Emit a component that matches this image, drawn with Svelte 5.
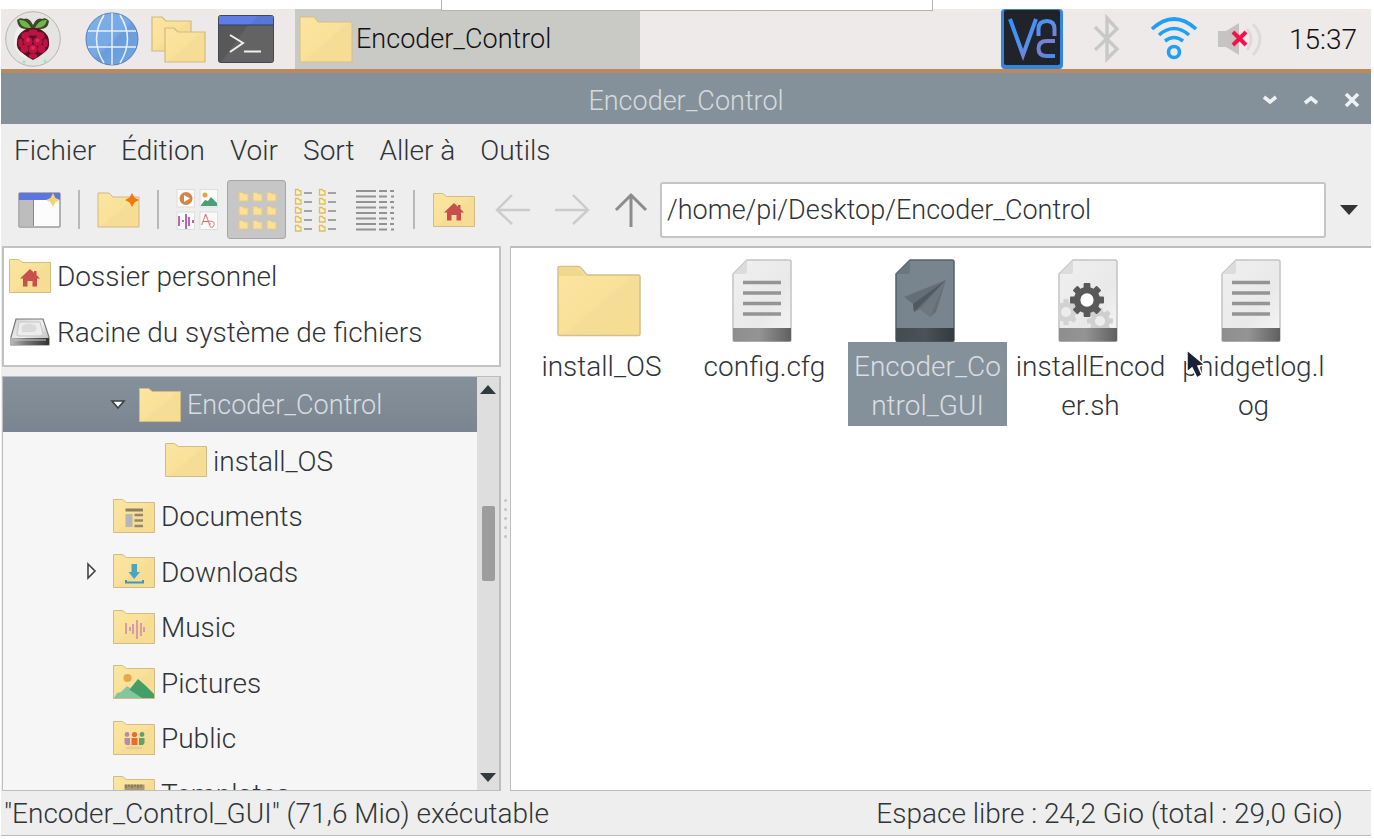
<script>
  const menus = ['Fichier', 'Édition', 'Voir', 'Sort', 'Aller à', 'Outils'];
  const places = [
    { name: 'Dossier personnel', icon: 'home' },
    { name: 'Racine du système de fichiers', icon: 'drive' }
  ];
  const tree = [
    { name: 'Encoder_Control', icon: 'plain', level: 1, open: true },
    { name: 'install_OS', icon: 'plain', level: 2 },
    { name: 'Documents', icon: 'documents', level: 0 },
    { name: 'Downloads', icon: 'downloads', level: 0, closed: true },
    { name: 'Music', icon: 'music', level: 0 },
    { name: 'Pictures', icon: 'pictures', level: 0 },
    { name: 'Public', icon: 'public', level: 0 },
    { name: 'Templates', icon: 'templates', level: 0 }
  ];
  const files = [
    { name: 'install_OS', icon: 'folder' },
    { name: 'config.cfg', icon: 'text' },
    { name: 'Encoder_Control_GUI', icon: 'program' },
    { name: 'installEncoder.sh', icon: 'script' },
    { name: 'phidgetlog.log', icon: 'text' }
  ];
  let selected = $state('Encoder_Control_GUI');
  let current = $state('Encoder_Control');
  let path = $state('/home/pi/Desktop/Encoder_Control');
  const teeth = [0, 45, 90, 135, 180, 225, 270, 315];
</script>

{#snippet gear(cx, cy, r, fill)}
  <g transform="translate({cx} {cy})">
    {#each teeth as a}
      <rect x={-r * 0.2} y={-r} width={r * 0.4} height={r * 0.5} rx="1" {fill} transform="rotate({a})" />
    {/each}
    <circle r={r * 0.58} fill="none" stroke={fill} stroke-width={r * 0.38} />
  </g>
{/snippet}

{#snippet folder(kind)}
  <svg class="ico" width="42" height="36" viewBox="0 0 42 36" aria-hidden="true">
    <path d="M.5 1.5H9.5L13.5 4.5H41.5V34.5H.5Z" fill="url(#gold)" stroke="#d2bc85" />
    {#if kind === 'home'}
      <path d="M21 11L11 20.5H14V28.5H18.500V23H23.500V28.500H28V20.500H31L27.500 17V13H25V14.800Z" fill="#c8504c" />
    {:else if kind === 'documents'}
      <path d="M12.500 10.500H30V13.500H12.500Z" fill="#8b8063" />
      <path d="M12.500 16H19.500V29H12.500Z" fill="#b9b5b4" />
      <path d="M21.500 17H30M21.500 22.500H30M21.500 28H30" stroke="#93886a" stroke-width="2.600" />
    {:else if kind === 'downloads'}
      <path d="M18.500 11H24V19H27L21.200 26L15.500 19H18.500Z" fill="#4aa5c4" />
      <path d="M13 27V29.500H30V27" fill="none" stroke="#3c9abb" stroke-width="2" />
    {:else if kind === 'music'}
      <path d="M13 14V25M17 18V22M20 15V25M24 11V30M28 14V27M31 18V23" stroke="#cf86ac" stroke-width="1.500" />
    {:else if kind === 'pictures'}
      <circle cx="14.500" cy="14" r="4" fill="#e3a94c" />
      <path d="M1 34L4 29L8 28L14 22L20 26L27 34Z" fill="#84c5a0" />
      <path d="M17 25L25 15L33 22L41 30V34H20L13 29Z" fill="#459d68" />
      <path d="M1 34L14 24L29 34Z" fill="#84c5a0" />
    {:else if kind === 'public'}
      <g fill="#b58ab0"><circle cx="14" cy="14.500" r="2.400" /><path d="M11.500 18H17V25H13L11.500 23Z" /></g>
      <g fill="#5fa06b"><circle cx="29" cy="14.500" r="2.400" /><path d="M26 18H31.500V23L30 25H26Z" /></g>
      <g fill="#e26e35"><circle cx="21.500" cy="14.500" r="2.600" /><path d="M18.500 18H24.500V25H18.500Z" /></g>
      <path d="M13 28H29" stroke="#dcc7a0" stroke-width="1.500" />
    {:else if kind === 'templates'}
      <path d="M11.500 9.500H31.500V28H11.500Z" fill="#a89873" />
      <path d="M13 9.500V13M16 9.500V12M19 9.500V13M22 9.500V12M25 9.500V13M28 9.500V12" stroke="#6b634d" />
    {/if}
  </svg>
{/snippet}

<svg class="defs" width="0" height="0" aria-hidden="true">
  <defs>
    <linearGradient id="gold" x1="0" y1="0" x2="1" y2="1">
      <stop offset="0" stop-color="#fbe5a0" /><stop offset=".5" stop-color="#fae199" /><stop offset=".55" stop-color="#f5dd97" /><stop offset="1" stop-color="#f8dd91" />
    </linearGradient>
    <linearGradient id="page" x1="0" y1="0" x2="1" y2="1">
      <stop offset="0" stop-color="#f0f0f0" /><stop offset=".6" stop-color="#e9e9e9" /><stop offset="1" stop-color="#f6f6f6" />
    </linearGradient>
    <linearGradient id="foot"><stop offset="0" stop-color="#8e8e8e" /><stop offset=".45" stop-color="#949494" /><stop offset="1" stop-color="#606060" /></linearGradient>
    <linearGradient id="footDark"><stop offset="0" stop-color="#444b51" /><stop offset=".5" stop-color="#4a5158" /><stop offset="1" stop-color="#333a40" /></linearGradient>
    <linearGradient id="metal" x1="0" y1="0" x2="1" y2="1"><stop offset="0" stop-color="#d0d0d0" /><stop offset=".5" stop-color="#f0f0f0" /><stop offset="1" stop-color="#b0b0b0" /></linearGradient>
    <linearGradient id="metalFront"><stop offset="0" stop-color="#b8b8b8" /><stop offset=".4" stop-color="#777" /><stop offset="1" stop-color="#333" /></linearGradient>
    <linearGradient id="vnc" x1="0" y1="0" x2="1" y2="1"><stop offset="0" stop-color="#2994ff" /><stop offset=".5" stop-color="#5590ee" /><stop offset=".75" stop-color="#7d7fcc" /><stop offset="1" stop-color="#3c91f2" /></linearGradient>
    <linearGradient id="globe" x1="0" y1="0" x2="1" y2="1"><stop offset="0" stop-color="#80b1ed" /><stop offset=".5" stop-color="#77a9e6" /><stop offset=".55" stop-color="#699cda" /><stop offset="1" stop-color="#73a5e4" /></linearGradient>
  </defs>
</svg>

<div class="desktop">
  <div class="drawer"></div>
  <header class="taskbar">
    <button class="launch" aria-label="Menu">
      <svg width="56" height="56" viewBox="0 0 56 56">
        <circle cx="28" cy="28" r="27.300" fill="#e4e4e3" stroke="#b9b5b1" />
        <path d="M9 32Q8 15 25 8L22 48Q12 46 9 32Z" fill="#f5f5f4" opacity=".7" />
        <path d="M12 9Q15 6 19 8Q24 6 28 14Q32 6 37 8Q41 6 44 10Q43 19 34 18L28 19L22 18Q13 19 12 9Z" fill="#39472a" />
        <path d="M14 9Q22 8 26 17Q16 18 14 9ZM42 9Q34 8 30 17Q40 18 42 9Z" fill="#72b648" />
        <path d="M28 17Q35 17 38 20Q44 24 44 31Q45 37 40 41Q34 46 28 49Q22 46 16 41Q11 37 12 31Q12 24 18 20Q21 17 28 17Z" fill="#5a1024" />
        <g fill="#bd1343">
          <ellipse cx="28" cy="21.500" rx="4.800" ry="3.200" /><ellipse cx="20.500" cy="24.500" rx="4.300" ry="3.400" transform="rotate(-30 20.500 24.500)" /><ellipse cx="35.500" cy="24.500" rx="4.300" ry="3.400" transform="rotate(30 35.500 24.500)" />
          <circle cx="23" cy="30.500" r="4.600" /><circle cx="33" cy="30.500" r="4.600" />
          <ellipse cx="15.500" cy="32" rx="2.300" ry="4.300" /><ellipse cx="40.500" cy="32" rx="2.300" ry="4.300" />
          <circle cx="28" cy="38" r="4.600" /><circle cx="19.500" cy="38" r="3.900" /><circle cx="36.500" cy="38" r="3.900" /><ellipse cx="28" cy="45" rx="4.400" ry="2.500" />
        </g>
        <g fill="#e0295d"><circle cx="23" cy="29" r="2" /><circle cx="32.500" cy="29.500" r="2" /><circle cx="28" cy="37" r="2" /></g>
        <g fill="#8ee8c0"><circle cx="19" cy="51" r="1.500" /><circle cx="40" cy="50" r="1.500" /></g>
      </svg>
    </button>
    <button class="launch" aria-label="Navigateur">
      <svg width="54" height="54" viewBox="0 0 54 54">
        <circle cx="27" cy="27" r="26" fill="url(#globe)" stroke="#5c80ae" />
        <g fill="none" stroke="#e6f0fb" stroke-width="1.500"><path d="M27 1V53M3 19H51M3 35H51M19 3Q4 27 19 51M35 3Q50 27 35 51" /></g>
      </svg>
    </button>
    <button class="launch" aria-label="Gestionnaire de fichiers">
      <svg width="55" height="48" viewBox="0 0 55 48">
        <g fill="url(#gold)" stroke="#d0b982" stroke-width="1.200"><path d="M1 2H11L15 6H40V36H1Z" /><path d="M14 13H23L27 17H54V47H14Z" /></g>
      </svg>
    </button>
    <button class="launch" aria-label="Terminal">
      <svg width="56" height="48" viewBox="0 0 56 48">
        <rect x=".5" y=".5" width="55" height="47" rx="2" fill="#585858" stroke="#43474f" />
        <path d="M30 10H55V47H3Z" fill="#636363" /><path d="M1 1H55V10H1Z" fill="#5f7ce8" /><path d="M40 1H55V10H32Z" fill="#5875d9" />
        <path d="M1 10H55" stroke="#33405e" /><path d="M12 20L25 28L12 37M26 36.500H43" fill="none" stroke="#f0f0f0" stroke-width="2" />
      </svg>
    </button>
    <button class="task">
      <svg width="54" height="47" viewBox="0 0 54 47" aria-hidden="true"><path d="M1 1H15L19 6H53V46H1Z" fill="url(#gold)" stroke="#d3bf8a" /></svg>
      Encoder_Control
    </button>
    <div class="tray">
      <svg width="62" height="60" viewBox="0 0 62 60" role="img" aria-label="VNC">
        <rect width="62" height="60" rx="4" fill="#3585e0" /><rect x="3" y="1" width="56" height="55" rx="2" fill="#20232a" />
        <path d="M9 10L22 46L35 10M37.500 27V20Q37.500 12 46 12Q53.500 12 53.500 20V27M54 32H46Q37.500 32 37.500 39.500Q37.500 47 46 47H54" fill="none" stroke="url(#vnc)" stroke-width="4" />
      </svg>
      <svg class="bt" width="27" height="50" viewBox="0 0 27 50" role="img" aria-label="Bluetooth"><path d="M2 13L24 35L14 45V4L24 15L2 36" fill="none" stroke="#c9c8c8" stroke-width="3.400" /></svg>
      <svg class="wifi" width="46" height="44" viewBox="0 0 46 44" role="img" aria-label="Wi-Fi">
        <g fill="none" stroke="#1fa0f5" stroke-width="3.600"><path d="M1 12Q23-8 45 12M8 18Q23 5 38 18M14 24Q23 17 32 24" /><circle cx="23" cy="35" r="5.500" /></g>
      </svg>
      <svg class="sound" width="46" height="36" viewBox="0 0 46 36" role="img" aria-label="Son coupé">
        <path d="M1 10H9L22 2V34L9 26H1Z" fill="#c5c4c3" /><g fill="none" stroke="#dddbda" stroke-width="3"><path d="M30 8Q38 18 30 29M36 3Q50 18 36 34" /></g>
        <path d="M16 11L29 24M29 11L16 24" stroke="#f3114e" stroke-width="4" />
      </svg>
      <time>15:37</time>
    </div>
  </header>

  <main class="window">
    <div class="titlebar">
      <h1>Encoder_Control</h1>
      <div class="controls">
        <button aria-label="Réduire"><svg width="16" height="16" viewBox="0 0 16 16"><path d="M2 5L8 10L14 5" /></svg></button>
        <button aria-label="Agrandir"><svg width="16" height="16" viewBox="0 0 16 16"><path d="M2 11L8 6L14 11" /></svg></button>
        <button aria-label="Fermer"><svg width="16" height="16" viewBox="0 0 16 16"><path d="M2 2L14 14M14 2L2 14" /></svg></button>
      </div>
    </div>

    <nav class="menubar">
      {#each menus as m}<button>{m}</button>{/each}
    </nav>

    <div class="toolbar">
      <button aria-label="Nouvelle fenêtre">
        <svg width="43" height="38" viewBox="0 0 43 38">
          <rect x="1" y="2" width="41" height="34" rx="1" fill="#fcfcfc" stroke="#9b9b9b" stroke-width="1.500" /><path d="M2 9H15V35H2Z" fill="#bdbdbd" /><path d="M15.500 9V35" stroke="#888" />
          <path d="M1 2H42V9H1Z" fill="#5c76e0" /><path d="M35 2L37.500 7L42 9L37.500 11L35 16L32.500 11L28 9L32.500 7Z" fill="#f5d272" />
        </svg>
      </button>
      <span class="sep"></span>
      <button aria-label="Nouveau dossier">
        <svg width="44" height="38" viewBox="0 0 44 38">
          <path d="M1 2H12L16 6H42V36H1Z" fill="url(#gold)" stroke="#cfb987" /><path d="M35 2L37.500 6.500L42 9L37.500 11.500L35 16L32.500 11.500L28 9L32.500 6.500Z" fill="#f0790f" />
        </svg>
      </button>
      <span class="sep"></span>
      <button aria-label="Vignettes">
        <svg width="43" height="42" viewBox="0 0 43 42">
          <g fill="#fafafa" stroke="#dedede"><rect x="1" y=".5" width="17.500" height="17.500" /><rect x="24" y=".5" width="17.500" height="17.500" /><rect x="1" y="23" width="17.500" height="17.500" /><rect x="24" y="23" width="17.500" height="17.500" /></g>
          <circle cx="10" cy="9.500" r="6.500" fill="#d98345" /><path d="M8 6L14 9.500L8 13Z" fill="#fff" />
          <circle cx="29" cy="6" r="2.500" fill="#e5a73e" /><path d="M25 16L29 11L32 12L35 8L41 14V17H25Z" fill="#4a9e78" />
          <path d="M3 27V37M7 31V33M10 25V40M13 28V37M17 31V34" stroke="#a3399b" stroke-width="1.500" />
          <text x="25" y="36" font-size="15" fill="#d0666c">A</text><path d="M33 32Q41 32 37 38Q33 40 34 34" fill="none" stroke="#d68488" />
        </svg>
      </button>
      <button class="on" aria-label="Icônes" aria-pressed="true">
        <svg width="40" height="40" viewBox="0 0 40 40">
          {#each [0, 1, 2] as r}{#each [0, 1, 2] as c}
            <path transform="translate({1 + c * 14} {1 + r * 14})" d="M1 1.500H4.500L6 3H10V10H1Z" fill="#fbe197" stroke="#e3ca88" />
          {/each}{/each}
        </svg>
      </button>
      <button aria-label="Liste compacte">
        <svg width="43" height="44" viewBox="0 0 43 44">
          {#each [0, 1, 2, 3, 4] as r}{#each [0, 1] as c}
            <g transform="translate({c * 24} {1 + r * 9})"><path d="M1.500.500H4L5.500 2H7V6H1.500Z" fill="#fdf1c8" stroke="#dfbd61" stroke-width="1.300" /><path d="M10 4H18" stroke="#909090" stroke-width="1.600" /></g>
          {/each}{/each}
        </svg>
      </button>
      <button aria-label="Liste détaillée">
        <svg width="40" height="42" viewBox="0 0 40 42"><path d="M1 2H21M1 7.500H21M1 13H21M1 18.500H21M1 24H21M1 29.500H21M1 35H21M1 40.500H21M24 2H32M24 7.500H32M24 13H32M24 18.500H32M24 24H32M24 29.500H32M24 35H32M24 40.500H32M35 2H39M36 7.500H39M35 13H39M36 18.500H39M35 24H39M36 29.500H39M35 35H39M36 40.500H39" stroke="#929292" stroke-width="1.800" /></svg>
      </button>
      <span class="sep"></span>
      <button aria-label="Dossier personnel">{@render folder('home')}</button>
      <button aria-label="Précédent" disabled><svg width="36" height="34" viewBox="0 0 36 34"><path d="M35 17H2M17 2L2 17L17 31" fill="none" stroke="#cbcbcb" stroke-width="2.400" /></svg></button>
      <button aria-label="Suivant" disabled><svg width="36" height="34" viewBox="0 0 36 34"><path d="M1 17H34M19 2L34 17L19 31" fill="none" stroke="#cbcbcb" stroke-width="2.400" /></svg></button>
      <button aria-label="Dossier parent"><svg width="34" height="36" viewBox="0 0 34 36"><path d="M17 35V3M2 18L17 3L32 18" fill="none" stroke="#8c8c8c" stroke-width="3" /></svg></button>
      <input aria-label="Chemin" bind:value={path} />
      <button class="drop" aria-label="Historique"><svg width="18" height="10" viewBox="0 0 18 10"><path d="M0 0H18L9 10Z" fill="#333" /></svg></button>
    </div>

    <div class="content">
      <aside>
        <div class="places">
          {#each places as p}
            <button class="row">
              {#if p.icon === 'home'}
                {@render folder('home')}
              {:else}
                <svg class="ico" width="42" height="30" viewBox="0 0 42 30" aria-hidden="true">
                  <path d="M7 2H34L40 20V28H2V20Z" fill="url(#metal)" stroke="#777" stroke-width="1.200" />
                  <path d="M10 5H31L34 17Q34 19 31 19H10Q7 19 8 16Z" fill="#ececec" stroke="#c5c5c5" />
                  <path d="M13 9Q20 4 27 9Q29 14 24 15H13Z" fill="#dadada" /><path d="M2 21H40V27Q40 28 39 28H3Q2 28 2 27Z" fill="url(#metalFront)" /><path d="M5 23H37" stroke="#c9c9c9" />
                </svg>
              {/if}
              <span class="name">{p.name}</span>
            </button>
          {/each}
        </div>
        <div class="tree">
          <div class="nodes">
            {#each tree as n}
              <button class="row level{n.level}" class:current={n.name === current} onclick={() => (current = n.name)}>
                <span class="twist">
                  {#if n.open}<svg width="16" height="12" viewBox="0 0 16 12"><path d="M2 2H14L8 9Z" fill="#fff" stroke="#3b4046" stroke-width="1.600" /></svg>{/if}
                  {#if n.closed}<svg width="12" height="18" viewBox="0 0 12 18"><path d="M2 2L9 9L2 16Z" fill="#fff" stroke="#444" stroke-width="1.600" /></svg>{/if}
                </span>
                {@render folder(n.icon)}
                <span class="name">{n.name}</span>
              </button>
            {/each}
          </div>
          <div class="scroll">
            <svg width="16" height="9" viewBox="0 0 16 9"><path d="M0 9H16L8 0Z" fill="#333a3d" /></svg>
            <div class="track"><div class="thumb"></div></div>
            <svg width="16" height="9" viewBox="0 0 16 9"><path d="M0 0H16L8 9Z" fill="#333a3d" /></svg>
          </div>
        </div>
      </aside>
      <div class="grip"><i></i><i></i><i></i><i></i><i></i></div>
      <section class="files">
        {#each files as f}
          <button class="file" class:picked={f.name === selected} onclick={() => (selected = f.name)}>
            {#if f.icon === 'folder'}
              <svg width="84" height="83" viewBox="0 0 84 83" aria-hidden="true">
                <path d="M1 9Q1 7.500 2.500 7.500H21Q23 7.500 24 9L30 16H81.500Q83 16 83 17.500V75Q83 76.500 81.500 76.500H2.500Q1 76.500 1 75Z" fill="url(#gold)" stroke="#d4c08c" stroke-width="1.500" />
                <path d="M2 8.500H21L28 17H2Z" fill="#f0d88d" />
              </svg>
            {:else}
              <svg width="60" height="83" viewBox="0 0 60 83" aria-hidden="true">
                {#if f.icon === 'program'}
                  <path d="M1 15L15 1H57Q59 1 59 3V81Q59 82.500 57 82.500H3Q1 82.500 1 81Z" fill="#79858e" stroke="#56616a" stroke-width="1.500" />
                  <path d="M1.500 15L15 1.500V13Q15 15 13 15Z" fill="#6b767f" /><path d="M1 69H59V81Q59 82.500 57 82.500H3Q1 82.500 1 81Z" fill="url(#footDark)" />
                  <path d="M51 21L9 38L18 45L19 53L25 50L35 58L41 53Z" fill="#636e77" /><path d="M51 21L18 45L19 53Z" fill="#4f5962" /><path d="M51 21L25 50L35 58Z" fill="#6d7780" />
                {:else}
                  <path d="M1 15L15 1H57Q59 1 59 3V81Q59 82.500 57 82.500H3Q1 82.500 1 81Z" fill="url(#page)" stroke="#c4c4c4" stroke-width="1.500" />
                  {#if f.icon === 'text'}
                    <path d="M11 23.500H49M11 34H49M11 44.500H49M11 55H49" stroke="#949494" stroke-width="3.500" />
                  {:else}
                    {@render gear(8, 53, 13, '#d2d2d2')}
                    {@render gear(42, 62, 13, '#cfcfcf')}
                    <circle cx="29" cy="41" r="12" fill="#fff" />
                    {@render gear(29, 41, 17, '#595959')}
                  {/if}
                  <path d="M1.500 15L15 1.500V13Q15 15 13 15Z" fill="#dcdcdc" /><path d="M1 69H59V81Q59 82.500 57 82.500H3Q1 82.500 1 81Z" fill="url(#foot)" />
                {/if}
              </svg>
            {/if}
            <span>{f.name}</span>
          </button>
        {/each}
        <svg class="pointer" width="24" height="32" viewBox="0 0 24 32" aria-hidden="true"><path d="M2 2V24L7 20L12 30L17 27L13 18L20 17Z" fill="#1a2136" stroke="#fff" stroke-width="1.500" /></svg>
      </section>
    </div>

    <footer><span>"Encoder_Control_GUI" (71,6 Mio) exécutable</span><span>Espace libre : 24,2 Gio (total : 29,0 Gio)</span></footer>
  </main>
</div>

<style>
  :global(body) { margin: 0; background: #fff; }
  .defs { position: absolute; }
  .desktop {
    box-sizing: border-box; height: 100vh; padding: 9px 3px 3px 1px; display: flex; flex-direction: column;
    position: relative; overflow: hidden; font: 300 28px/39px Roboto, sans-serif; color: #303438;
  }
  button { font: inherit; color: inherit; background: none; border: 0; padding: 0; margin: 0; text-align: left; }
  svg { display: block; flex: none; }
  .drawer { position: absolute; top: 0; left: 441px; right: 441px; height: 10px; background: #fff; border: 1px solid #b4b4b4; border-top: 0; }

  .taskbar { display: flex; align-items: center; gap: 12px; height: 60px; padding-left: 4px; background: linear-gradient(90deg, #ece9e8, #eeeaea); border-bottom: 4px solid #b98a5d; color: #111; font-size: 27px; }
  .launch:first-child { margin-right: 12px; }
  .task { display: flex; align-items: center; gap: 3px; box-sizing: border-box; width: 345px; height: 60px; padding-left: 4px; margin-left: 9px; background: #c9c9c5; }
  .tray { display: flex; align-items: center; margin-left: auto; padding-right: 14px; }
  .bt { margin-left: 30px; }
  .wifi { margin-left: 31px; }
  .sound { margin-left: 20px; }
  time { margin-left: 26px; font-size: 28px; }

  .window { flex: 1; min-height: 0; display: flex; flex-direction: column; background: #eee; border-bottom: 1px solid #bbb; }
  .titlebar { display: grid; grid-template-columns: 1fr auto 1fr; align-items: center; height: 51px; background: #85919a; color: #d5dade; font-size: 27px; }
  h1 { grid-column: 2; margin: 0; font: inherit; padding-top: 5px; }
  .controls { display: flex; justify-content: end; gap: 25px; padding: 2px 11px 0 0; }
  .controls path { fill: none; stroke: #eef1f3; stroke-width: 3.6; }
  .menubar { box-sizing: border-box; display: flex; align-items: center; gap: 25px; height: 50px; padding: 2px 0 0 13px; }
  .toolbar { box-sizing: border-box; display: flex; align-items: center; height: 72px; padding: 0 0 1px 9px; }
  .toolbar > button { box-sizing: border-box; flex: none; width: 59px; height: 59px; display: grid; place-items: center; }
  .toolbar > .on { background: #c6c6c6; border: 1px solid #a6a6a6; border-radius: 3px; }
  .toolbar > .drop { width: 45px; }
  .sep { flex: none; width: 2px; height: 39px; margin: 0 9px; background: #b9b9b9; }
  input { box-sizing: border-box; flex: 1; min-width: 0; height: 56px; padding: 0 5px; border: 2px solid #c5c5c5; border-radius: 3px; background: #fff; font: inherit; font-size: 27px; color: inherit; outline: 0; }

  .content { flex: 1; min-height: 0; display: flex; padding-left: 1px; }
  aside { flex: none; width: 499px; display: flex; flex-direction: column; gap: 9px; }
  .places { box-sizing: border-box; height: 121px; border: 2px solid #c2c2c2; background: #fff; }
  .row { display: flex; align-items: center; gap: 6px; width: 100%; height: 56px; white-space: nowrap; }
  .places .row { padding-left: 5px; }
  .tree { flex: 1; min-height: 0; display: flex; border: 1px solid #bdbdbd; border-right-width: 2px; }
  .nodes { flex: 1; overflow: hidden; background: #f6f6f6; }
  .nodes .row { box-sizing: border-box; }
  .nodes .row:nth-child(odd) { height: 55px; }
  .nodes .name { padding-top: 2px; }
  .level0 { padding-left: 81px; }
  .level1 { padding-left: 107px; }
  .level2 { padding-left: 133px; }
  .current { background: linear-gradient(#85919a, #7b8591); color: #d9dde1; font-size: 27px; }
  .twist { display: grid; place-items: center; flex: none; width: 16px; margin-right: 7px; }
  .scroll { flex: none; width: 22px; display: flex; flex-direction: column; align-items: center; padding: 8px 0; background: #dedede; }
  .track { flex: 1; width: 13px; display: flex; flex-direction: column; padding-top: 112px; }
  .thumb { height: 75px; border-radius: 2px; background: #9d9d9d; }
  .grip { flex: none; width: 9px; display: flex; flex-direction: column; align-items: center; justify-content: center; gap: 6px; }
  .grip i { width: 3px; height: 3px; border-radius: 50%; background: #c4c4c4; }

  .files { position: relative; flex: 1; min-width: 0; display: flex; flex-wrap: wrap; align-content: start; padding: 11px 0 0 9px; border: solid #bdbdbd; border-width: 2px 0 1px 1px; background: #fff; }
  .file { width: 163px; display: flex; flex-direction: column; align-items: center; }
  .file svg { margin-right: 6px; }
  .file span { box-sizing: border-box; width: 159px; padding: 5px 4px 1px; text-align: center; word-break: break-all; }
  .picked span { background: #85919a; color: #d9dee2; }
  .pointer { position: absolute; left: 674px; top: 100px; }
  footer { display: flex; justify-content: space-between; align-items: center; height: 44px; padding: 0 28px 0 3px; white-space: nowrap; }
</style>
